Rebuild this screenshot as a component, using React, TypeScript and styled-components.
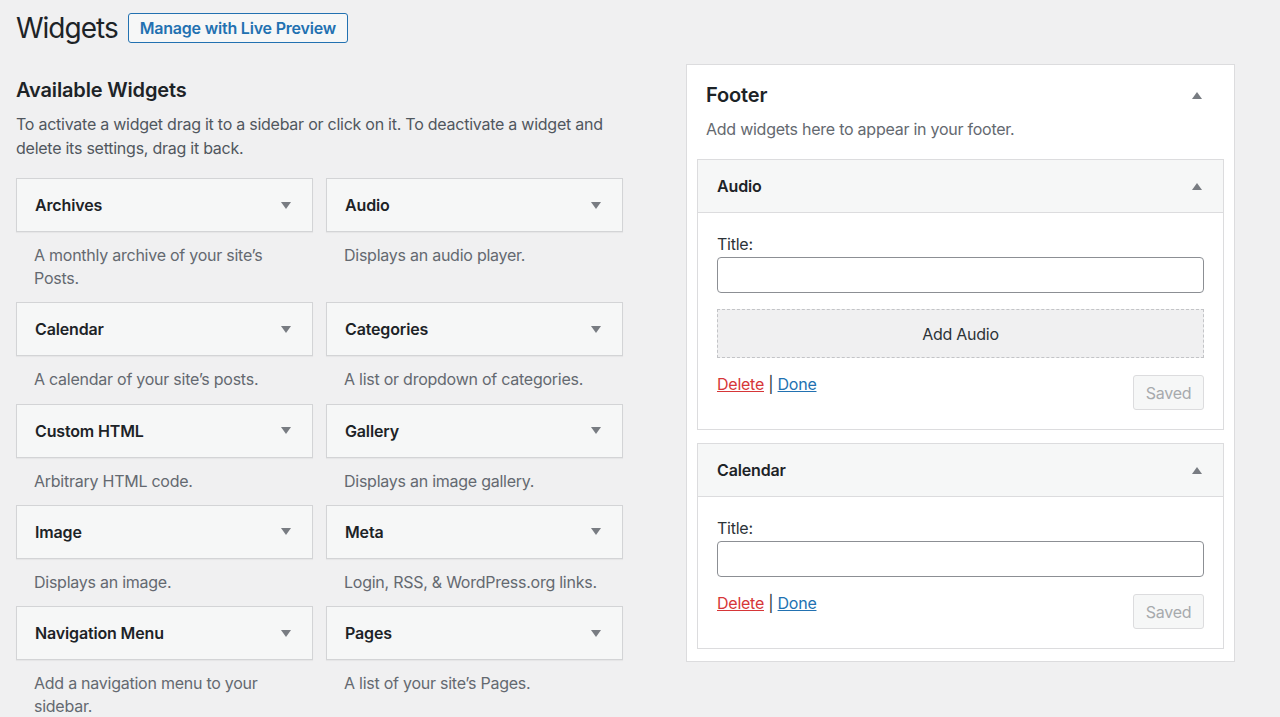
import React from "react";
import styled, { createGlobalStyle } from "styled-components";

const GlobalStyle = createGlobalStyle`
  html, body { margin: 0; padding: 0; }
  body {
    background: #f0f0f1;
    font-family: Inter, "Noto Sans", "Liberation Sans", sans-serif;
    color: #1d2327;
    letter-spacing: -0.25px;
    -webkit-font-smoothing: antialiased;
  }
  * { box-sizing: border-box; }
  button, input { letter-spacing: inherit; }
`;

const Page = styled.div`
  padding: 13px 0 0 16px;
  width: 1280px;
  height: 717px;
  overflow: hidden;
`;

const HeaderRow = styled.div`
  display: flex;
  align-items: center;
  gap: 10px;
  height: 30px;
`;

const PageTitle = styled.h1`
  margin: 0;
  font-size: 28px;
  font-weight: 400;
  line-height: 30px;
  color: #1d2327;
  letter-spacing: -1px;
`;

const OutlineButton = styled.button`
  height: 30px;
  padding: 0 11px;
  border: 1px solid #2271b1;
  border-radius: 3px;
  background: #f6f7f7;
  color: #2271b1;
  font-family: inherit;
  font-size: 16px;
  font-weight: 600;
  letter-spacing: -0.2px;
  cursor: pointer;
`;

const Main = styled.div`
  display: flex;
  align-items: flex-start;
  margin-top: 21px;
`;

const LeftColumn = styled.div`
  width: 607px;
  flex: none;
`;

const SectionTitle = styled.h2`
  margin: 12px 0 8px;
  font-size: 20px;
  font-weight: 600;
  line-height: 28px;
  letter-spacing: -0.15px;
  color: #1d2327;
`;

const Intro = styled.p`
  margin: 0 0 18px;
  font-size: 16px;
  line-height: 24px;
  color: #50575e;
`;

const WidgetGrid = styled.div`
  display: grid;
  grid-template-columns: 297px 297px;
  column-gap: 13px;
`;

const WidgetItem = styled.div``;

const WidgetTop = styled.div`
  height: 54px;
  display: flex;
  align-items: center;
  justify-content: space-between;
  padding: 0 21px 0 18px;
  background: #f6f7f7;
  border: 1px solid #d3d4d6;
  box-shadow: 0 1px 1px rgba(0, 0, 0, 0.04);
`;

const WidgetName = styled.span`
  font-size: 16px;
  font-weight: 600;
  letter-spacing: -0.15px;
  color: #1d2327;
`;

const Triangle = styled.span<{ $up?: boolean }>`
  width: 0;
  height: 0;
  border-left: 5px solid transparent;
  border-right: 5px solid transparent;
  ${(p) =>
    p.$up
      ? "border-bottom: 7px solid #787c82;"
      : "border-top: 7px solid #787c82;"}
  flex: none;
`;

const WidgetDescription = styled.div`
  padding: 12px 18px 12.3px 18px;
  font-size: 16px;
  line-height: 23px;
  color: #646970;
`;

const SidebarPanel = styled.div`
  margin-left: 63px;
  width: 549px;
  flex: none;
  background: #fff;
  border: 1px solid #dcdcde;
  padding: 16px 10px 12px;
`;

const SidebarHeader = styled.div`
  padding: 0 22px 0 9px;
  display: flex;
  align-items: center;
  justify-content: space-between;
`;

const SidebarTitle = styled.h2`
  margin: 0;
  font-size: 20px;
  font-weight: 600;
  line-height: 28px;
  letter-spacing: -0.15px;
  color: #1d2327;
`;

const SidebarDescription = styled.p`
  margin: 9px 0 18px;
  padding: 0 9px;
  font-size: 16px;
  line-height: 23px;
  color: #646970;
`;

const WidgetStack = styled.div`
  display: flex;
  flex-direction: column;
  gap: 13px;
`;

const OpenWidget = styled.div`
  border: 1px solid #dcdcde;
  background: #fff;
`;

const OpenWidgetTop = styled.div`
  height: 53px;
  display: flex;
  align-items: center;
  justify-content: space-between;
  padding: 0 21px 0 19px;
  background: #f6f7f7;
  border-bottom: 1px solid #dcdcde;
`;

const WidgetBody = styled.div`
  padding: 19px 19px 19px;
`;

const FieldLabel = styled.label`
  display: block;
  font-size: 16px;
  line-height: 24px;
  color: #2c3338;
`;

const TextInput = styled.input`
  display: block;
  width: 100%;
  height: 36px;
  margin-top: 1px;
  border: 1px solid #8c8f94;
  border-radius: 4px;
  background: #fff;
  font-family: inherit;
  font-size: 16px;
  padding: 0 10px;
`;

const MediaPlaceholder = styled.div`
  margin-top: 16px;
  height: 49px;
  display: flex;
  align-items: center;
  justify-content: center;
  background: #f0f0f1;
  border: 1px dashed #c3c4c7;
  font-size: 16px;
  color: #2c3338;
`;

const Actions = styled.div`
  margin-top: 15px;
  display: flex;
  align-items: flex-start;
  justify-content: space-between;
`;

const ActionLinks = styled.div`
  font-size: 16px;
  line-height: 23px;
  color: #2c3338;
`;

const ActionLink = styled.a<{ $danger?: boolean }>`
  color: ${(p) => (p.$danger ? "#d63638" : "#2271b1")};
  text-decoration: underline;
  cursor: pointer;
`;

const SavedButton = styled.button`
  margin-top: 2px;
  height: 35px;
  width: 71px;
  padding: 0;
  border: 1px solid #dcdcde;
  border-radius: 3px;
  background: #f6f7f7;
  color: #a7aaad;
  font-family: inherit;
  font-size: 16px;
`;

const widgets = [
  { name: "Archives", desc: "A monthly archive of your site’s Posts." },
  { name: "Audio", desc: "Displays an audio player." },
  { name: "Calendar", desc: "A calendar of your site’s posts." },
  { name: "Categories", desc: "A list or dropdown of categories." },
  { name: "Custom HTML", desc: "Arbitrary HTML code." },
  { name: "Gallery", desc: "Displays an image gallery." },
  { name: "Image", desc: "Displays an image." },
  { name: "Meta", desc: "Login, RSS, & WordPress.org links." },
  { name: "Navigation Menu", desc: "Add a navigation menu to your sidebar." },
  { name: "Pages", desc: "A list of your site’s Pages." },
];

function WidgetActions() {
  return (
    <Actions>
      <ActionLinks>
        <ActionLink $danger>Delete</ActionLink> | <ActionLink>Done</ActionLink>
      </ActionLinks>
      <SavedButton disabled>Saved</SavedButton>
    </Actions>
  );
}

export default function App() {
  return (
    <>
      <GlobalStyle />
      <Page>
        <HeaderRow>
          <PageTitle>Widgets</PageTitle>
          <OutlineButton>Manage with Live Preview</OutlineButton>
        </HeaderRow>
        <Main>
          <LeftColumn>
            <SectionTitle>Available Widgets</SectionTitle>
            <Intro>
              To activate a widget drag it to a sidebar or click on it. To
              deactivate a widget and delete its settings, drag it back.
            </Intro>
            <WidgetGrid>
              {widgets.map((w) => (
                <WidgetItem key={w.name}>
                  <WidgetTop>
                    <WidgetName>{w.name}</WidgetName>
                    <Triangle />
                  </WidgetTop>
                  <WidgetDescription>{w.desc}</WidgetDescription>
                </WidgetItem>
              ))}
            </WidgetGrid>
          </LeftColumn>
          <SidebarPanel>
            <SidebarHeader>
              <SidebarTitle>Footer</SidebarTitle>
              <Triangle $up />
            </SidebarHeader>
            <SidebarDescription>
              Add widgets here to appear in your footer.
            </SidebarDescription>
            <WidgetStack>
              <OpenWidget>
                <OpenWidgetTop>
                  <WidgetName>Audio</WidgetName>
                  <Triangle $up />
                </OpenWidgetTop>
                <WidgetBody>
                  <FieldLabel>Title:</FieldLabel>
                  <TextInput type="text" />
                  <MediaPlaceholder>Add Audio</MediaPlaceholder>
                  <WidgetActions />
                </WidgetBody>
              </OpenWidget>
              <OpenWidget>
                <OpenWidgetTop>
                  <WidgetName>Calendar</WidgetName>
                  <Triangle $up />
                </OpenWidgetTop>
                <WidgetBody>
                  <FieldLabel>Title:</FieldLabel>
                  <TextInput type="text" />
                  <WidgetActions />
                </WidgetBody>
              </OpenWidget>
            </WidgetStack>
          </SidebarPanel>
        </Main>
      </Page>
    </>
  );
}
